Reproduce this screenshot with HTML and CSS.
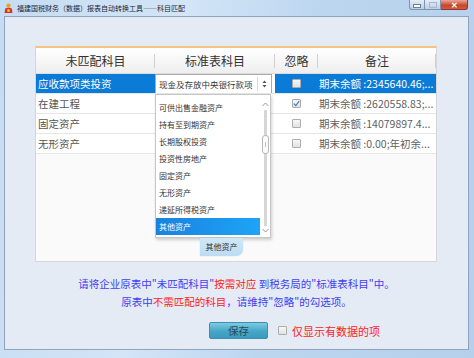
FILE: index.html
```html
<!DOCTYPE html>
<html lang="zh-CN">
<head>
    <meta charset="UTF-8">
    <title>科目匹配</title>
    <link rel="stylesheet" href="styles.css">
</head>
<body>

<div class="window">
    <div class="titlebar">
        <svg class="app-icon" viewBox="0 0 9 10">
            <circle cx="4.5" cy="2.6" r="2.2" fill="#f0a020"/>
            <path d="M0.5 10 L1.2 5.6 Q4.5 4 7.8 5.6 L8.5 10 Z" fill="#d9322a"/>
            <rect x="3.4" y="6.2" width="2.2" height="2.6" fill="#f7d24a"/>
        </svg>
        <span class="title">福建国税财务（数据）报表自动转换工具——科目匹配</span>
        <div class="controls">
            <span class="ctl min"><i></i></span>
            <span class="ctl max"><i></i></span>
            <span class="ctl close">✕</span>
        </div>
    </div>

    <div class="client">
        <div class="panel">
            <div class="row head">
                <div class="cell">未匹配科目</div>
                <div class="cell">标准表科目</div>
                <div class="cell">忽略</div>
                <div class="cell">备注</div>
            </div>
            <div class="row selected">
                <div class="cell name">应收款项类投资</div>
                <div class="cell pick">
                    <div class="select">
                        <span class="select-text">现金及存放中央银行款项</span>
                        <span class="select-arrow">
                            <svg width="5" height="8" viewBox="0 0 5 8"><path d="M2.5 0.5 L4.5 3 L0.5 3 Z M2.5 7.5 L4.5 5 L0.5 5 Z" fill="#555"/></svg>
                        </span>
                    </div>
                </div>
                <div class="cell ignore"><span class="cb"></span></div>
                <div class="cell note">期末余额 :2345640.46;...</div>
            </div>
            <div class="row">
                <div class="cell name">在建工程</div>
                <div class="cell pick"></div>
                <div class="cell ignore">
                    <span class="cb">
                        <svg width="7" height="7" viewBox="0 0 7 7"><path d="M0.8 3.6 L2.8 5.6 L6.3 1" fill="none" stroke="#3b78c9" stroke-width="1.2"/></svg>
                    </span>
                </div>
                <div class="cell note">期末余额 :2620558.83;...</div>
            </div>
            <div class="row">
                <div class="cell name">固定资产</div>
                <div class="cell pick"></div>
                <div class="cell ignore"><span class="cb"></span></div>
                <div class="cell note">期末余额 :14079897.4...</div>
            </div>
            <div class="row">
                <div class="cell name">无形资产</div>
                <div class="cell pick"></div>
                <div class="cell ignore"><span class="cb"></span></div>
                <div class="cell note">期末余额 :0.00;年初余...</div>
            </div>

            <div class="dropdown">
                <ul class="options">
                    <li>可供出售金融资产</li>
                    <li>持有至到期资产</li>
                    <li>长期股权投资</li>
                    <li>投资性房地产</li>
                    <li>固定资产</li>
                    <li>无形资产</li>
                    <li>递延所得税资产</li>
                    <li class="active">其他资产</li>
                </ul>
                <div class="scrollbar">
                    <svg class="chev" width="7" height="5" viewBox="0 0 7 5"><path d="M0.5 4 L3.5 1 L6.5 4" fill="none" stroke="#999" stroke-width="1"/></svg>
                    <div class="track"><div class="thumb"></div></div>
                    <svg class="chev" width="7" height="5" viewBox="0 0 7 5"><path d="M0.5 1 L3.5 4 L6.5 1" fill="none" stroke="#999" stroke-width="1"/></svg>
                </div>
            </div>
            <div class="tip">其他资产</div>
        </div>

        <div class="hint">
            <p>请将企业原表中"未匹配科目"<em>按需对应</em> 到税务局的"标准表科目"中。</p>
            <p>原表中<em>不需匹配的科目</em>，请维持"忽略"的勾选项。</p>
        </div>

        <div class="actions">
            <button class="save">保存</button>
            <span class="cb"></span>
            <label class="only">仅显示有数据的项</label>
        </div>
    </div>
</div>

</body>
</html>
```

FILE: styles.css
```css
body {
    margin: 0;
    font-family: "Noto Sans CJK SC", "Liberation Sans", sans-serif;
}
.window {
    width: 474px;
    height: 358px;
    display: flex;
    flex-direction: column;
    overflow: hidden;
    background: linear-gradient(100deg, #c6dcf2 0%, #d3e5f7 35%, #bcd6f0 60%, #b6d0ec 100%);
}
.titlebar {
    height: 16px;
    display: flex;
    align-items: center;
    padding-left: 4px;
}
.app-icon {
    width: 9px;
    height: 10px;
}
.title {
    font-size: 7px;
    margin-left: 4px;
    color: #1c2633;
}
.controls {
    margin-left: auto;
    margin-right: 6px;
    align-self: flex-start;
    display: flex;
    height: 10px;
}
.ctl {
    width: 16px;
    box-sizing: border-box;
    border: 1px solid #7f93ad;
    border-top: none;
    background: linear-gradient(#e4edf7, #bccfe5);
    display: flex;
    align-items: center;
    justify-content: center;
}
.ctl.min {
    border-bottom-left-radius: 3px;
}
.ctl.min i {
    width: 6px;
    height: 2px;
    margin-top: 3px;
    background: #fff;
    border: 1px solid #6b7f99;
}
.ctl.max {
    border-left: none;
}
.ctl.max i {
    width: 6px;
    height: 4px;
    border: 1px solid #a9b7c9;
}
.ctl.close {
    width: 27px;
    border-left: none;
    border-color: #8a3a2a;
    border-bottom-right-radius: 3px;
    background: linear-gradient(#e9a795, #c8452d 60%, #d65a3c);
    color: #fff;
    font-size: 8px;
    font-weight: bold;
    line-height: 1;
}
.client {
    margin: 0 5px 0 4px;
    height: 334px;
    box-sizing: border-box;
    border: 1px solid #8fa3bd;
    background: #e5ebf4;
    padding: 29px 0 0 30px;
}
.panel {
    position: relative;
    width: 402px;
    height: 216px;
    box-sizing: border-box;
    border: 1px solid #d6d6d6;
    border-top: 2px solid #f6c383;
    background: #fafafa;
}
.row {
    display: grid;
    grid-template-columns: 119px 120px 43px 118px;
    height: 20px;
    box-sizing: border-box;
    border-bottom: 1px solid #e6e6e6;
    background: #fff;
}
.cell {
    font-size: 10.5px;
    line-height: 19px;
    color: #555;
    white-space: nowrap;
    overflow: hidden;
}
.row.head {
    height: 26px;
    border-bottom: 1px solid #dcdcdc;
    background: linear-gradient(#ffffff, #eeeeee);
}
.row.head .cell {
    font-size: 12px;
    line-height: 25px;
    color: #333;
    text-align: center;
    background: linear-gradient(#cfcfcf, #cfcfcf) right center / 1px 14px no-repeat;
}
.name {
    padding-left: 2px;
}
.note {
    font-size: 10.5px;
    padding-left: 1px;
    color: #5f5f5f;
}
.row.selected .name,
.row.selected .ignore,
.row.selected .note {
    background: #0b7bd8;
    color: #fff;
}
.row.selected .pick {
    background: #fff;
}
.ignore {
    display: flex;
    align-items: center;
    justify-content: center;
}
.cb {
    width: 9px;
    height: 9px;
    box-sizing: border-box;
    border: 1px solid #adadad;
    border-radius: 1px;
    background: linear-gradient(#f7f7f7, #e2e2e2);
    display: flex;
    align-items: center;
    justify-content: center;
}
.select {
    width: 117px;
    height: 20px;
    box-sizing: border-box;
    border: 1px solid #ababab;
    background: #fff;
    display: flex;
    align-items: center;
}
.select-text {
    flex: 1;
    font-size: 8.5px;
    color: #333;
    padding-left: 3px;
}
.select-arrow {
    width: 13px;
    height: 14px;
    border-left: 1px solid #d8d8d8;
    display: flex;
    align-items: center;
    justify-content: center;
}
.dropdown {
    position: absolute;
    left: 119px;
    top: 46px;
    width: 116px;
    height: 144px;
    box-sizing: border-box;
    border: 1px solid #c6c6c6;
    background: #fff;
    box-shadow: 1px 2px 3px rgba(0, 0, 0, 0.18);
    display: flex;
}
.options {
    flex: 1;
    list-style: none;
    margin: 0;
    padding: 4px 0 0;
}
.options li {
    height: 17px;
    line-height: 17px;
    font-size: 8px;
    color: #333;
    padding-left: 3px;
}
.options li.active {
    color: #fff;
    background: linear-gradient(90deg, #1a82de, #1ea4f6);
}
.scrollbar {
    width: 9px;
    margin-left: 1px;
    display: flex;
    flex-direction: column;
    align-items: center;
}
.chev {
    margin: 7px 0 3px;
}
.scrollbar .chev:last-child {
    margin: 2px 0 4px;
}
.track {
    flex: 1;
    width: 9px;
    display: flex;
    flex-direction: column;
    align-items: center;
    background: linear-gradient(#d6d6d6, #d6d6d6) center / 3px 100% no-repeat;
}
.thumb {
    margin-top: 25px;
    width: 7px;
    height: 19px;
    box-sizing: border-box;
    border: 1px solid #b8b8b8;
    border-radius: 3px;
    background: linear-gradient(#c4c4c4, #c4c4c4) center / 1px 5px no-repeat, #fbfbfb;
}
.tip {
    position: absolute;
    left: 164px;
    top: 190px;
    width: 43px;
    height: 18px;
    line-height: 18px;
    font-size: 8px;
    color: #333;
    text-align: center;
    background: linear-gradient(#cfe8f8, #bcdcf2);
    border-bottom-right-radius: 7px;
    box-shadow: 0 0 1px rgba(90, 130, 170, 0.5);
}
.hint {
    margin-top: 13px;
    margin-left: -30px;
    text-align: center;
    font-size: 10.5px;
    color: #4040f0;
}
.hint p {
    margin: 0;
    line-height: 18px;
}
.hint em {
    font-style: normal;
    color: #ff2020;
}
.actions {
    margin-top: 11px;
    padding-left: 174px;
    display: flex;
    align-items: center;
    height: 17px;
}
.save {
    width: 59px;
    height: 17px;
    padding: 0;
    border: 1px solid #3f8fb0;
    border-radius: 2px;
    background: linear-gradient(#7ccbe2, #46a6c6 55%, #3a9bbd);
    font-family: inherit;
    font-size: 10.5px;
    color: #2a4a5e;
}
.actions .cb {
    margin-left: 10px;
}
.only {
    margin-left: 5px;
    font-size: 11px;
    color: #ff2222;
}
```
